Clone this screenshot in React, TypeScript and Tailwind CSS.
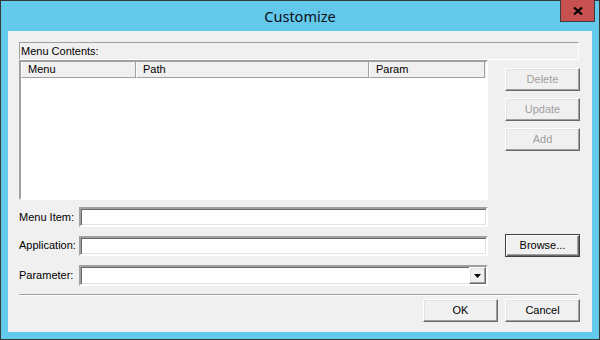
import React from "react";

// Classic Win32 "Customize" dialog under a Server 2012 style frame.

const btnRaised =
  "border border-t-white border-l-white border-b-[#696969] border-r-[#696969] shadow-[inset_-1px_-1px_0_#a0a0a0,inset_1px_1px_0_#e3e3e3] bg-[#f0f0f0]";

const sunken =
  "border border-t-[#a0a0a0] border-l-[#a0a0a0] border-b-white border-r-white shadow-[inset_1px_1px_0_#696969,inset_-1px_-1px_0_#e3e3e3] bg-white";

function PushButton({
  label,
  disabled,
  isDefault,
}: {
  label: string;
  disabled?: boolean;
  isDefault?: boolean;
}) {
  if (isDefault) {
    return (
      <div className="w-[75px] h-[23px] border border-[#404040] bg-[#f0f0f0] shadow-[inset_1px_1px_0_#fff,inset_-1px_-1px_0_#696969,inset_-2px_-2px_0_#a0a0a0] flex items-center justify-center text-black">
        {label}
      </div>
    );
  }
  return (
    <div
      className={`w-[75px] h-[23px] flex items-center justify-center ${btnRaised} ${
        disabled ? "text-[#a0a0a0]" : "text-black"
      }`}
    >
      {label}
    </div>
  );
}

function HeaderCell({ label, width }: { label: string; width: string }) {
  return (
    <div
      className={`${width} h-full flex items-center pl-[6px] border-l border-l-white border-r border-r-[#a0a0a0] border-b border-b-[#a0a0a0]`}
    >
      {label}
    </div>
  );
}

function FieldRow({
  label,
  children,
  right,
}: {
  label: string;
  children: React.ReactNode;
  right?: React.ReactNode;
}) {
  return (
    <div className="flex items-center">
      <div className="w-[60px]">{label}</div>
      {children}
      {right && <div className="ml-auto">{right}</div>}
    </div>
  );
}

export default function App() {
  return (
    <div className="w-[600px] h-[340px] bg-[#63c9ea] border border-[#363636] flex flex-col font-['Liberation_Sans',Arial,sans-serif] text-[11px] leading-none text-black">
      {/* Title bar */}
      <div className="h-[30px] grid grid-cols-[1fr_auto_1fr]">
        <div />
        <div className="self-center pt-[1px] font-['Noto_Sans','Open_Sans',sans-serif] text-[14.5px] text-[#0d0d1a]">
          Customize
        </div>
        <div className="justify-self-end self-start -mt-[1px] mr-[4px] w-[35px] h-[22px] bg-[#c75050] border border-[#3c3c3c] border-t-0 flex items-center justify-center">
          <svg width="10" height="8" viewBox="0 0 10 8">
            <path d="M1 0.5 L9 7.5 M9 0.5 L1 7.5" stroke="#000" strokeWidth="2.2" />
          </svg>
        </div>
      </div>

      {/* Client area */}
      <div className="mx-[7px] h-[301px] bg-[#f0f0f0] pl-[11px] pr-[12px] pt-[11px] flex flex-col">
        <div className="h-[18px] mr-[1px] border border-t-[#a0a0a0] border-l-[#a0a0a0] border-b-white border-r-white flex items-center pl-[1px]">
          Menu Contents:
        </div>

        <div className="flex">
          {/* List view */}
          <div className={`w-[469px] h-[140px] border-2 ${sunken} flex flex-col`}>
            <div className="h-[16px] flex bg-[#f0f0f0]">
              <HeaderCell label="Menu" width="w-[115px]" />
              <HeaderCell label="Path" width="w-[233px]" />
              <HeaderCell label="Param" width="w-[116px]" />
            </div>
            <div className="flex-1 bg-white" />
          </div>

          <div className="ml-auto pt-[8px] flex flex-col gap-[7px]">
            <PushButton label="Delete" disabled />
            <PushButton label="Update" disabled />
            <PushButton label="Add" disabled />
          </div>
        </div>

        {/* Fields */}
        <div className="mt-[7px] flex flex-col">
          <FieldRow label="Menu Item:">
            <div className={`w-[409px] h-[20px] border-2 ${sunken}`} />
          </FieldRow>
          <div className="mt-[7px]">
            <FieldRow label="Application:" right={<PushButton label="Browse..." isDefault />}>
              <div className={`w-[409px] h-[20px] border-2 ${sunken}`} />
            </FieldRow>
          </div>
          <div className="mt-[8px]">
            <FieldRow label="Parameter:">
              <div className={`w-[409px] h-[21px] border-2 ${sunken} flex justify-end`}>
                <div className={`w-[17px] h-full ${btnRaised} flex items-center justify-center`}>
                  <svg width="7" height="4" viewBox="0 0 7 4">
                    <path d="M0 0 H7 L3.5 4 Z" fill="#000" />
                  </svg>
                </div>
              </div>
            </FieldRow>
          </div>
        </div>

        <div className="mt-[8px] mr-[2px] border-t border-t-[#a0a0a0] border-b border-b-white" />

        <div className="mt-[3px] flex justify-end gap-[7px]">
          <PushButton label="OK" />
          <PushButton label="Cancel" />
        </div>
      </div>
    </div>
  );
}
